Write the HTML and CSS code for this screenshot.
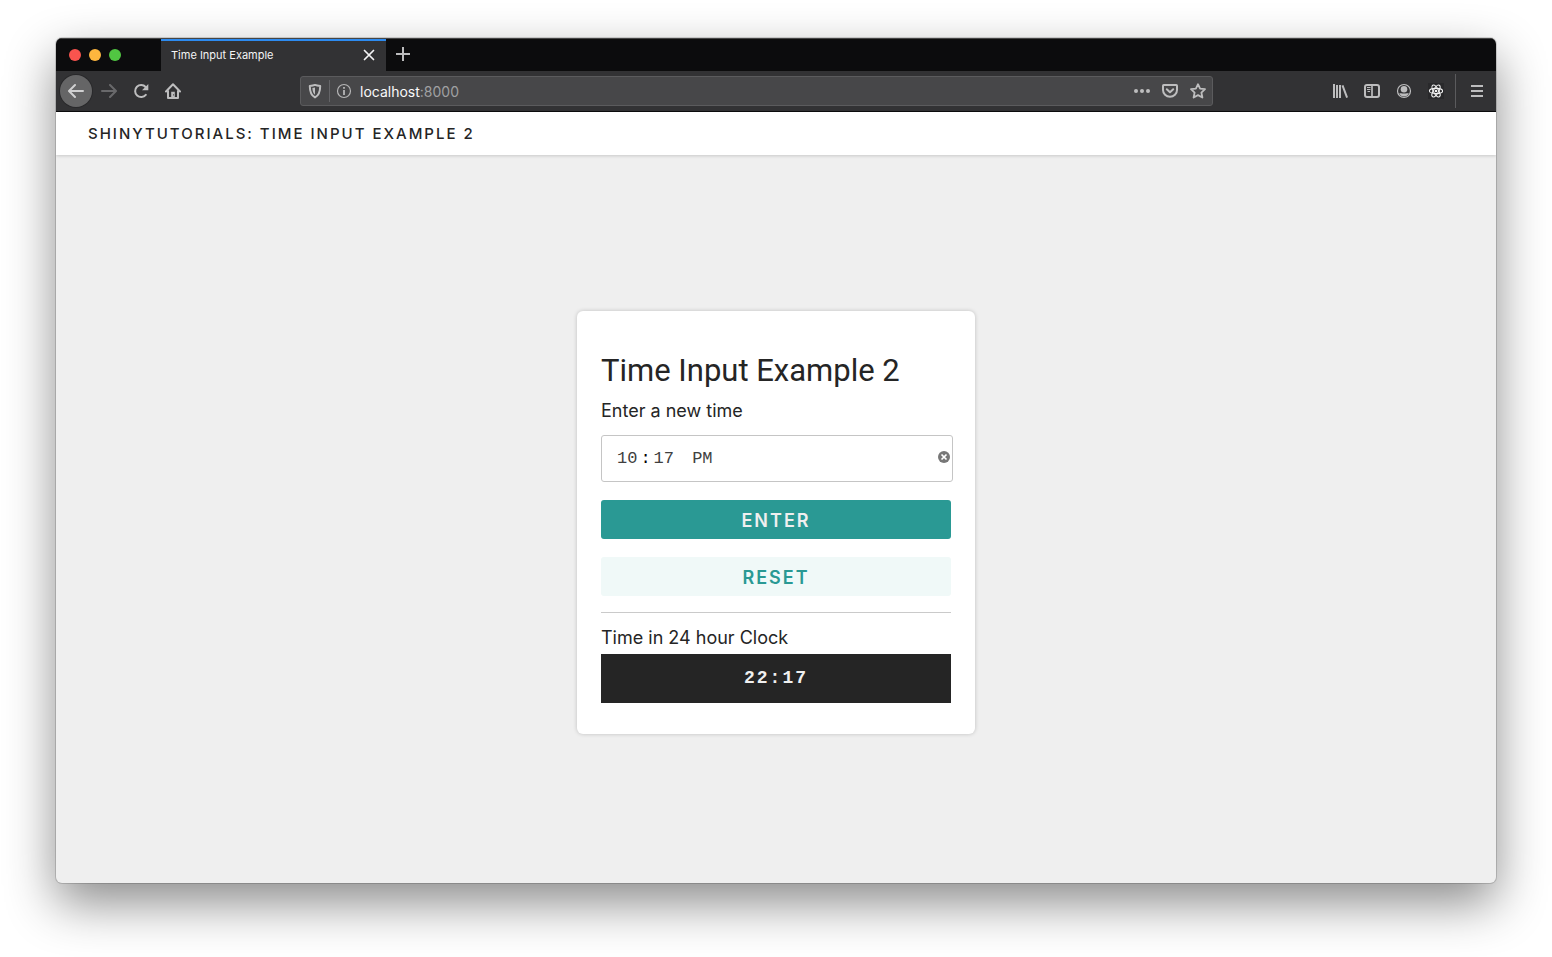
FILE: index.html
```html
<!DOCTYPE html>
<html lang="en-US">
<head>
<meta charset="utf-8">
<title>Time Input Example</title>
<link rel="stylesheet" href="styles.css">
</head>
<body>
<div class="window">
  <div class="tabbar">
    <div class="lights"><i class="light red"></i><i class="light amber"></i><i class="light green"></i></div>
    <div class="tab">
      <span class="tab-title">Time Input Example</span>
      <button class="icon-btn tab-close" aria-label="Close tab"><svg width="16" height="16" viewBox="0 0 16 16"><path d="M3.5 3.5l9 9M12.500 3.500l-9 9" stroke="#f4f4f5" stroke-width="1.700" fill="none" stroke-linecap="round"/></svg></button>
    </div>
    <button class="icon-btn new-tab" aria-label="New tab"><svg width="16" height="16" viewBox="0 0 16 16"><path d="M8 1v14M1 8h14" stroke="#bcbcbd" stroke-width="2" fill="none"/></svg></button>
  </div>
  <div class="toolbar">
    <button class="icon-btn back" aria-label="Back"><svg width="16" height="16" viewBox="0 0 16 16"><path d="M15 8H1.500M7 2L1 8l6 6" class="line thick light-line"/></svg></button>
    <button class="icon-btn forward" aria-label="Forward"><svg width="16" height="16" viewBox="0 0 16 16"><path d="M1 8h13.500M9 2l6 6-6 6" class="line thick"/></svg></button>
    <button class="icon-btn" aria-label="Reload"><svg width="16" height="16" viewBox="0 0 16 16"><path d="M12.800 11.800A6 6 0 1 1 12.600 4" class="line thick"/><path d="M15.300 1v6.300H9z" fill="#bdbdbe"/></svg></button>
    <button class="icon-btn" aria-label="Home"><svg width="16" height="16" viewBox="0 0 16 16"><path d="M1 8.500L8 1.300l7 7.200M3 7.500V15h10V7.500" class="line thick"/><path d="M6.200 14V8.800h3.600V14z" fill="#bdbdbe"/><path d="M8.200 11.200h.8v1.300h-.8z" fill="#323234"/></svg></button>
    <div class="urlbar">
      <svg class="shield" width="16" height="16" viewBox="0 0 16 16"><path d="M8 1.900c1.800.7 3.500.9 5.200 1.100 0 5.700-1 9.300-5.200 11.400C3.800 12.300 2.800 8.700 2.800 3 4.500 2.800 6.200 2.600 8 1.900z" class="line thick"/><path d="M8 4.600v7.200C6.200 10.500 5.500 8.300 5.400 5.100z" fill="#bdbdbe"/></svg>
      <span class="url-rule"></span>
      <svg width="16" height="16" viewBox="0 0 16 16"><circle cx="8" cy="8" r="6.500" fill="none" stroke="#b5b5b6" stroke-width="1.200"/><path d="M8 7v5M8 4v1.700" stroke="#bdbdbe" stroke-width="1.700"/></svg>
      <div class="url"><span class="host">localhost</span>:8000</div>
      <button class="icon-btn small" aria-label="Page actions"><svg width="16" height="16" viewBox="0 0 16 16" fill="#bdbdbe"><circle cx="2" cy="8" r="2"/><circle cx="8" cy="8" r="2"/><circle cx="14" cy="8" r="2"/></svg></button>
      <button class="icon-btn small" aria-label="Save to Pocket"><svg width="16" height="16" viewBox="0 0 16 16"><path d="M1.800 2h12.400q.8 0 .8.800V7A7 6.800 0 0 1 1 7V2.800Q1 2 1.800 2zM4.800 6.300L8 9.300l3.200-3" class="line thick"/></svg></button>
      <button class="icon-btn small" aria-label="Bookmark"><svg width="16" height="16" viewBox="0 0 16 16"><path d="M8 1.200l2.100 4.400 4.900.6-3.600 3.400 1 4.900L8 12.100l-4.400 2.400 1-4.900L1 6.200l4.900-.6z" class="line star"/></svg></button>
    </div>
    <button class="icon-btn" aria-label="Library"><svg width="16" height="16" viewBox="0 0 16 16"><path d="M2 1v14M5 2v13M8 2v13M10.500 2.300l4.600 12.400" stroke="#bdbdbe" stroke-width="2" fill="none"/></svg></button>
    <button class="icon-btn" aria-label="Sidebar"><svg width="16" height="16" viewBox="0 0 16 16"><rect x="1" y="2" width="14" height="12" rx="2" class="line thick"/><path d="M8 2v12" class="line"/><path d="M3 4.500h3.500M3 6.500h3.500M3.500 8.500H6" stroke="#bdbdbe" stroke-width="1"/></svg></button>
    <button class="icon-btn" aria-label="Account"><svg width="16" height="16" viewBox="0 0 16 16"><circle cx="8" cy="8" r="6.500" fill="none" stroke="#bdbdbe" stroke-width="1.200"/><circle cx="8" cy="6.200" r="3.300" fill="#bdbdbe"/><path d="M3.200 10.500c1.500-.6 2.400 0 4.800 0s3.300-.6 4.800 0A5.300 5.300 0 0 1 3.200 10.500z" fill="#bdbdbe"/></svg></button>
    <button class="icon-btn" aria-label="React developer tools"><svg width="16" height="16" viewBox="0 0 16 16"><path d="M0 0h16v16H0z" fill="#29292b"/><g fill="none" stroke="#f2f2f2" stroke-width="1.100"><ellipse cx="8" cy="8" rx="6.600" ry="2.600"/><ellipse cx="8" cy="8" rx="6.600" ry="2.600" transform="rotate(60 8 8)"/><ellipse cx="8" cy="8" rx="6.600" ry="2.600" transform="rotate(120 8 8)"/></g><circle cx="8" cy="8" r="1.300" fill="#f2f2f2"/></svg></button>
    <span class="tool-rule"></span>
    <button class="icon-btn menu" aria-label="Menu"><svg width="16" height="16" viewBox="0 0 16 16"><path d="M2 3h12M2 8h12M2 13h12" stroke="#bdbdbe" stroke-width="2"/></svg></button>
  </div>
  <header class="page-header">ShinyTutorials: Time Input Example 2</header>
  <main class="page">
    <form class="card">
      <h1>Time Input Example 2</h1>
      <label for="time">Enter a new time</label>
      <div class="time-field">
        <input id="time" type="time" value="22:17">
        <button type="button" class="clear" aria-label="Clear time"><svg width="12" height="12" viewBox="0 0 12 12"><circle cx="6" cy="6" r="6" fill="#777"/><path d="M3.500 3.500l5 5M8.500 3.500l-5 5" stroke="#fff" stroke-width="1.700"/></svg></button>
      </div>
      <button type="button" class="btn primary">Enter</button>
      <button type="button" class="btn secondary">Reset</button>
      <hr>
      <label for="result">Time in 24 hour Clock</label>
      <output id="result">22:17</output>
    </form>
  </main>
</div>
</body>
</html>
```
FILE: styles.css
```css
* { box-sizing: border-box; }
body {
  margin: 0;
  min-height: 100vh;
  padding: 38px 56px 74px;
  display: flex;
  background: #fff;
  color: #252525;
  font-family: Inter, "Liberation Sans", sans-serif;
}
button { border: 0; padding: 0; font: inherit; }
svg { display: block; flex: none; }
.line { fill: none; stroke: #bdbdbe; stroke-width: 1.7; stroke-linecap: round; stroke-linejoin: round; }
.line.thick { stroke-width: 2; }
.line.star { stroke-width: 1.8; }
.light-line { stroke: #d0d0d1; }

.window {
  flex: 1;
  display: flex;
  flex-direction: column;
  overflow: hidden;
  border-radius: 6px;
  background: #efefef;
  box-shadow: 0 0 0 1px rgba(0, 0, 0, .15), 0 20px 50px rgba(0, 0, 0, .46);
}
.tabbar { display: flex; height: 33px; background: #0c0c0d; border-top: 1px solid #454545; }
.lights { display: flex; align-items: center; gap: 8px; width: 105px; padding-left: 13px; }
.light { width: 12px; height: 12px; border-radius: 50%; }
.red { background: #f9544e; }
.amber { background: #fdb63e; }
.green { background: #51c642; }
.tab {
  display: flex;
  align-items: center;
  width: 225px;
  padding: 0 9px 2px 10px;
  background: #323234;
  border-top: 2px solid #2d8bf0;
}
.tab-title { flex: 1; color: #f4f4f5; font-size: 11px; line-height: 14px; }
.icon-btn {
  display: flex;
  flex: none;
  align-items: center;
  justify-content: center;
  width: 32px;
  height: 32px;
  background: none;
}
.icon-btn.small { width: 28px; height: 28px; }
.icon-btn.tab-close { width: 16px; height: 16px; }
.icon-btn.new-tab { width: 34px; height: 30px; }
.toolbar {
  display: flex;
  align-items: center;
  height: 41px;
  padding: 0 3px 0 4px;
  background: #323234;
  border-bottom: 1px solid #0c0c0d;
}
.icon-btn.back { border-radius: 50%; background: #656566; box-shadow: 0 0 0 1px #29292b; }
.forward { margin-left: 1px; opacity: .4; }
.urlbar {
  display: flex;
  flex: 1;
  align-items: center;
  height: 30px;
  margin: 0 111px;
  padding: 0 0 0 6px;
  border: 1px solid #5b5b5d;
  border-radius: 3px;
  background: #474749;
}
.url-rule { width: 1px; height: 22px; margin: 0 6px; background: #646467; }
.url { flex: 1; margin-left: 8px; padding-top: 1px; color: #a0a0a2; font-size: 14px; line-height: 20px; }
.host { color: #f9f9fa; }
.tool-rule { width: 1px; height: 34px; margin: 0 5px 0 3px; background: #5b5b5d; }

.page-header {
  height: 43px;
  padding: 0 32px;
  background: #fff;
  box-shadow: 0 1px 3px rgba(0, 0, 0, .16);
  font-size: 15px;
  font-weight: 500;
  letter-spacing: 2px;
  line-height: 44px;
  text-transform: uppercase;
}
.page { flex: 1; display: flex; align-items: center; justify-content: center; padding-top: 6px; }
.card {
  display: flex;
  flex-direction: column;
  width: 398px;
  padding: 40px 24px 31px;
  border-radius: 6px;
  background: #fff;
  box-shadow: 0 0 4px rgba(0, 0, 0, .2);
  font-size: 18px;
  line-height: 24px;
}
h1 { margin: 0 0 8px; font-family: Roboto, sans-serif; font-size: 31px; font-weight: 400; line-height: 40px; }
.time-field { position: relative; margin: 12px -2px 18px 0; }
#time {
  display: block;
  width: 100%;
  height: 47px;
  padding: 0 15px;
  border: 1px solid #c5c5c5;
  border-radius: 3px;
  background: #fff;
  color: #404040;
  font-family: "Liberation Mono", monospace;
  font-size: 17px;
}
#time::-webkit-calendar-picker-indicator { display: none; }
#time::-webkit-datetime-edit { padding: 0; }
#time::-webkit-datetime-edit-hour-field,
#time::-webkit-datetime-edit-minute-field { padding: 0; }
#time::-webkit-datetime-edit-ampm-field { padding: 0 0 0 7px; }
#time::-webkit-datetime-edit-text { padding: 0 3px; color: #000; font-weight: 700; }
.clear { position: absolute; top: 16px; right: 3px; width: 12px; height: 12px; background: none; }
.btn {
  height: 39px;
  padding-top: 3px;
  border-radius: 3px;
  font-weight: 600;
  letter-spacing: 2px;
  text-transform: uppercase;
}
.primary { margin-bottom: 18px; background: #2a9994; color: #efefef; }
.secondary { background: #f0f9f8; color: #2a9994; }
hr { width: 100%; height: 1px; margin: 16px 0 13px; border: 0; background: #cacaca; }
output {
  height: 49px;
  margin-top: 4px;
  background: #252525;
  color: #efefef;
  font-family: "Liberation Mono", monospace;
  font-weight: 700;
  letter-spacing: 2px;
  line-height: 49px;
  text-align: center;
}
```
